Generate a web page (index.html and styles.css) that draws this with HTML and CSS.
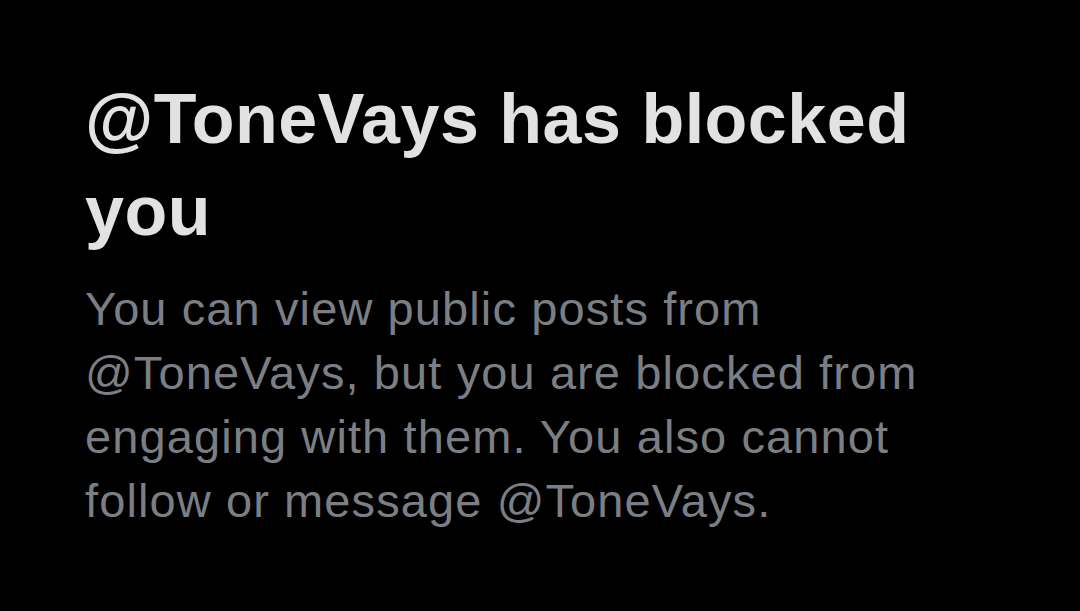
FILE: index.html
```html
<!DOCTYPE html>
<html>
<head>
<meta charset="utf-8">
<link rel="stylesheet" href="styles.css">
</head>
<body>
<main class="notice">
  <h1 class="title">@ToneVays has blocked you</h1>
  <p class="desc">You can view public posts from @ToneVays, but you are blocked from engaging with them. You also cannot follow or message @ToneVays.</p>
</main>
</body>
</html>
```
FILE: styles.css
```css
html, body {
  margin: 0;
  padding: 0;
  background: #000;
  height: 100%;
}
.notice {
  padding: 73px 0 0 85px;
  display: flex;
  flex-direction: column;
  gap: 20px;
}
.title {
  margin: 0;
  font-family: "Liberation Sans", Arial, sans-serif;
  font-weight: 700;
  font-size: 70px;
  line-height: 92px;
  letter-spacing: 0.5px;
  color: #e1e2e3;
  width: 880px;
}
.desc {
  margin: 0;
  font-family: "Liberation Sans", Arial, sans-serif;
  font-weight: 400;
  font-size: 47px;
  line-height: 64px;
  letter-spacing: 1.1px;
  color: #7b7f84;
  width: 880px;
}
```
